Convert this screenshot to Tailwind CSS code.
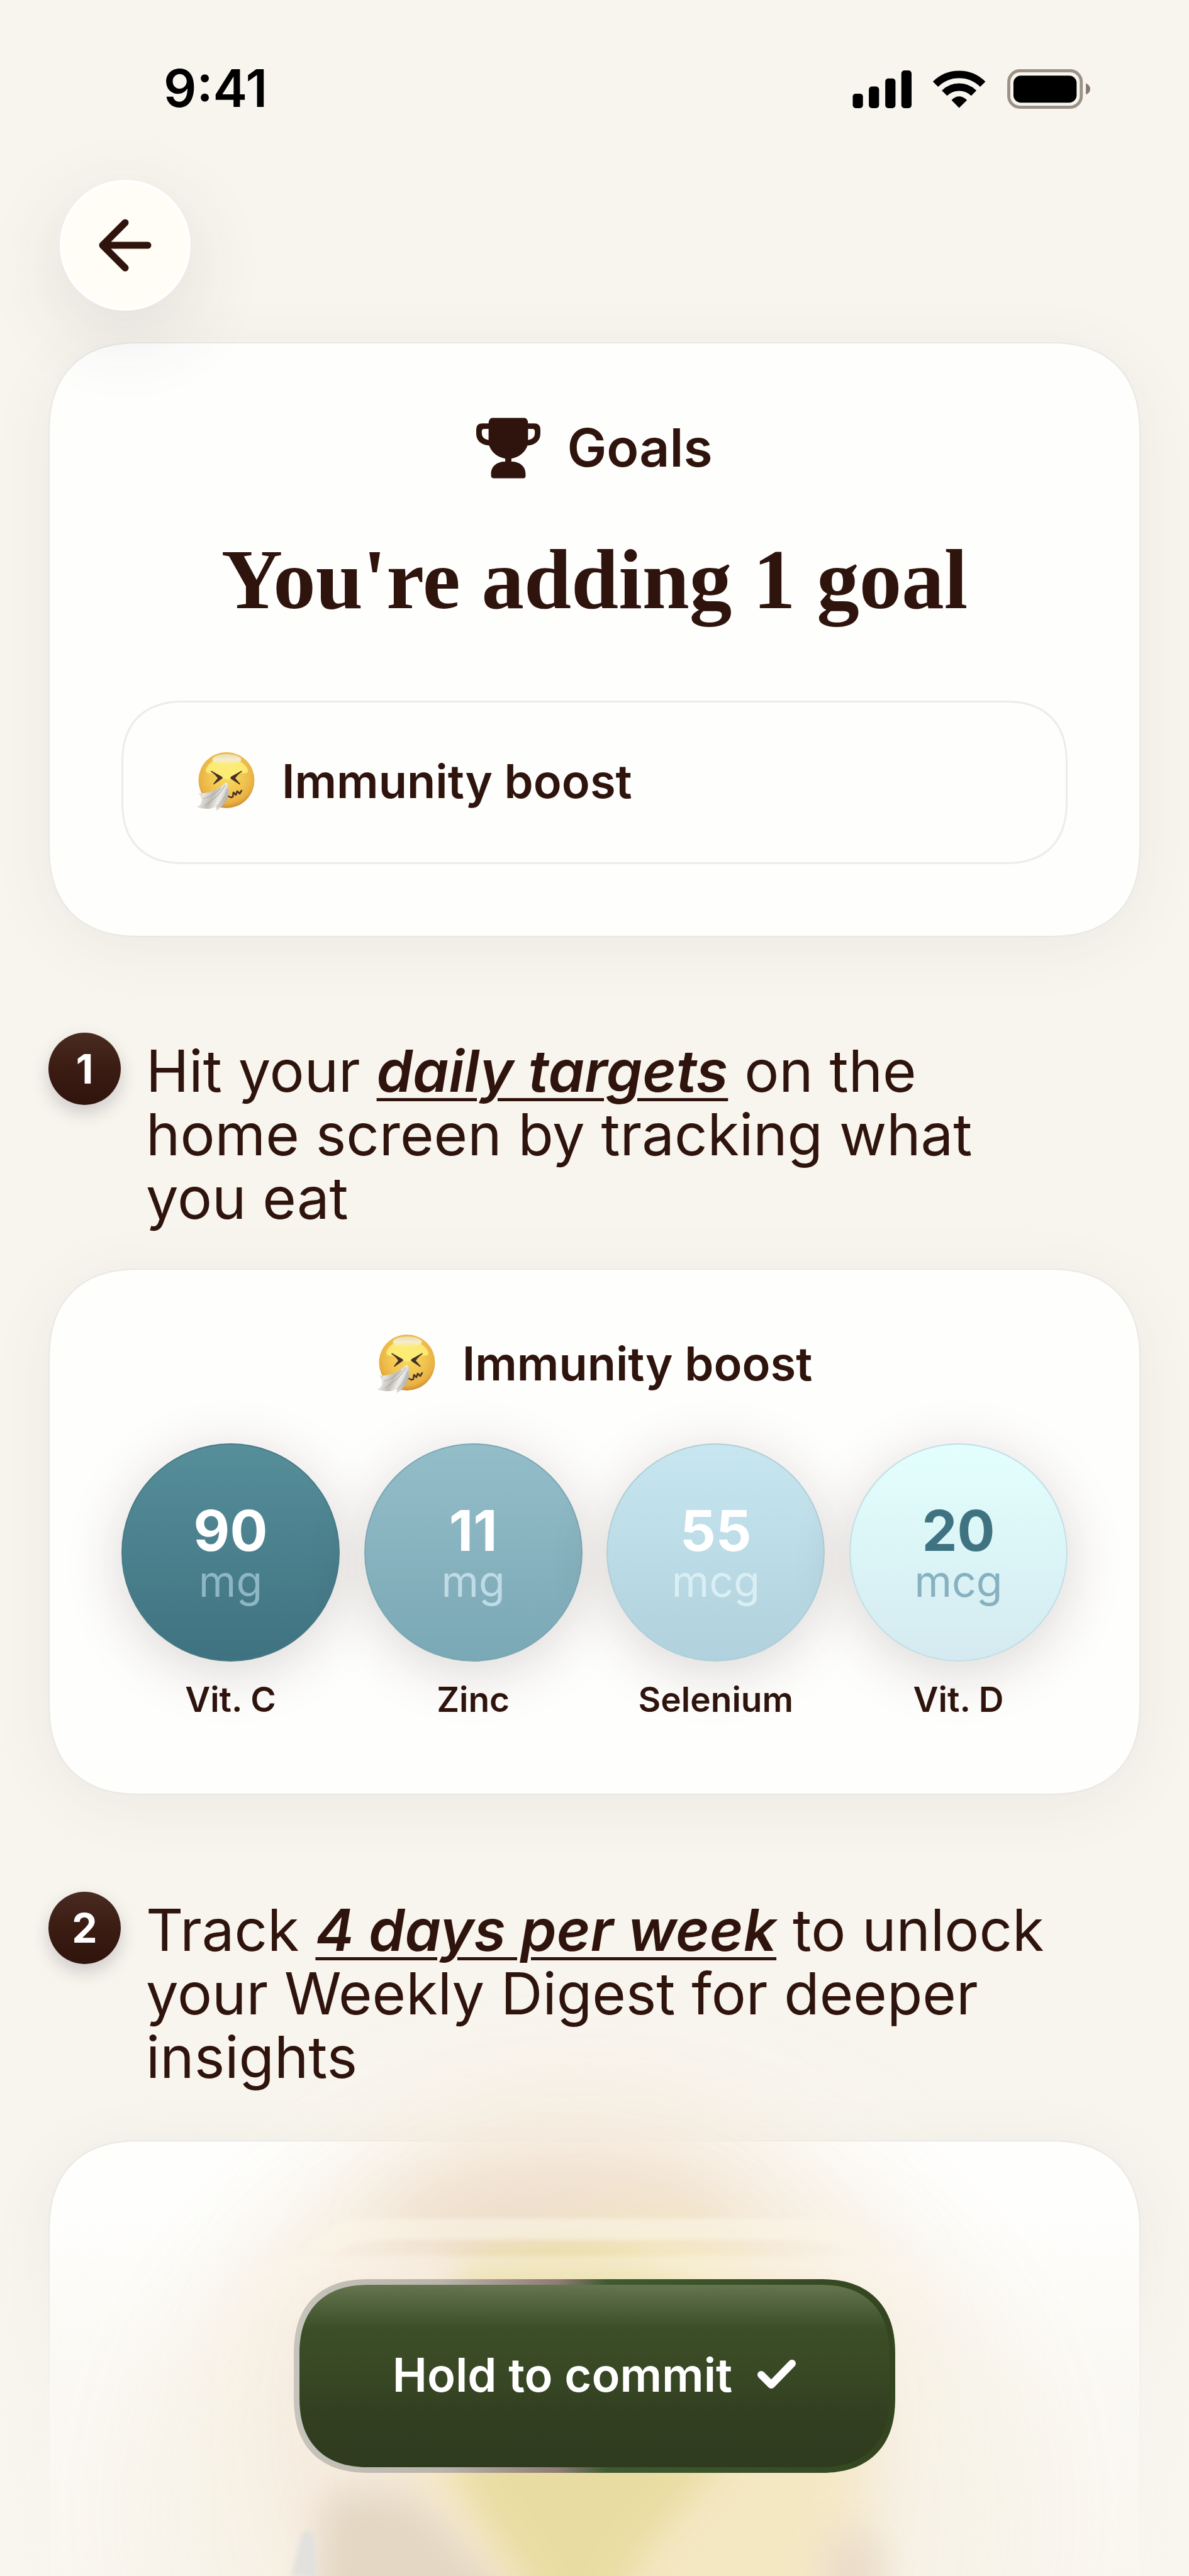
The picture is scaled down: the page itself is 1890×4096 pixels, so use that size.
<!DOCTYPE html>
<html lang="en">

<head>
  <meta charset="UTF-8">
  <meta name="viewport" content="width=device-width, initial-scale=1">
  <title>Goals</title>
  <script src="https://cdn.jsdelivr.net/npm/@tailwindcss/browser@4"></script>
</head>

<body class="relative flex h-screen flex-col overflow-hidden bg-[#f8f5ee] font-['Inter',sans-serif] text-[#2f140d]">

  <!-- Shared symbols -->
  <svg class="absolute size-0">
    <defs>
      <radialGradient id="face" cx="50%" cy="42%" r="58%">
        <stop offset="0" stop-color="#f8dc5c" />
        <stop offset="0.55" stop-color="#f2c550" />
        <stop offset="0.85" stop-color="#e8b143" />
        <stop offset="1" stop-color="#cf8c35" />
      </radialGradient>
      <linearGradient id="shine" x1="0" y1="0" x2="0" y2="1">
        <stop offset="0" stop-color="#eadcae" />
        <stop offset="0.5" stop-color="#f4edcf" />
        <stop offset="1" stop-color="#fbee77" stop-opacity="0.7" />
      </linearGradient>
      <linearGradient id="tissue" x1="0" y1="0" x2="1" y2="0.4">
        <stop offset="0" stop-color="#c9c6c0" />
        <stop offset="0.35" stop-color="#e6e4e0" />
        <stop offset="0.6" stop-color="#bfbbb5" />
        <stop offset="0.8" stop-color="#efeeea" />
        <stop offset="1" stop-color="#b5b1aa" />
      </linearGradient>
    </defs>
    <symbol id="sneeze" viewBox="11 11 94 94">
      <circle cx="59" cy="56.500" r="44.500" fill="url(#face)" />
      <path d="M26 40C32 26 44 22 59 22s28 5 34 18c1 10-12 2-20 8-5 4-7 7-13 7s-8-4-13-7c-8-5-20 2-21-8z" fill="#fdf07a" opacity="0.85" />
      <ellipse cx="59.500" cy="24" rx="23" ry="9" fill="url(#shine)" />
      <path d="M35 42.500L51 51.500Q53 52.500 51 54L39 62.500Q43 57 46 53.500Q42 47 35 42.500zM83 42.500L67 51.500Q65 52.500 67 54L80 62.500Q75 57 72 53.500Q76 47 83 42.500z" fill="#45302a" stroke="#45302a" stroke-width="1.500" stroke-linejoin="round" />
      <path d="M62 82l4 2 3-1 1-7 4 4 2-6 4 4 3-5" fill="none" stroke="#4a2f2a" stroke-width="2.500" stroke-linejoin="round" stroke-linecap="round" />
      <path d="M58 60C62 61 64 70 62 80C60 90 52 99 43 105L42 99C34 104 20 102 11 99C18 97 20 92 19 86Q18 81 15 77C30 79 44 72 58 60z" fill="url(#tissue)" />
      <path d="M57 64C52 76 40 86 24 97M60 70C58 84 50 94 43 99M50 69C42 78 32 84 22 86" fill="none" stroke="#aaa69f" stroke-width="1.500" opacity="0.7" />
    </symbol>
  </svg>

  <!-- Header -->
  <header class="relative z-10">
    <div class="flex h-[282px] items-center justify-between pl-[260px] pr-[157px] text-black">
      <span class="text-[82px] font-semibold leading-none">9:41</span>
      <svg class="h-[67px] w-[378px]" viewBox="37 28 384 68">
        <rect x="37.500" y="69.500" width="16.500" height="23.500" rx="5" />
        <rect x="63.500" y="58" width="16.500" height="35" rx="5" />
        <rect x="90" y="45" width="16.500" height="48" rx="5" />
        <rect x="116" y="32" width="16.500" height="61" rx="5" />
        <g fill="none" stroke="#000" stroke-width="12">
          <path d="M171.100 54.300A54 54 0 0 1 247.500 54.300" />
          <path d="M185.600 68.800A33.500 33.500 0 0 1 233 68.800" />
        </g>
        <path d="M209.300 92.500L197 80Q209 68 222 80z" />
        <rect x="289.500" y="32.500" width="117" height="59" rx="18" fill="none" stroke="#9b9187" stroke-width="5" />
        <rect x="297" y="40.500" width="102" height="43.500" rx="12" />
        <path d="M414 52.500Q421 56 421 62T414 71z" fill="#86786d" />
      </svg>
    </div>
    <button aria-label="Back" class="ml-[95px] mt-1 flex size-[208px] items-center justify-center rounded-full border-4 border-white bg-[#fffdf6] shadow-[0_36px_130px_rgba(60,60,70,0.12)]">
      <svg class="h-[84px] w-[84px]" viewBox="0 0 84 84" fill="none" stroke="#2f140d" stroke-width="11" stroke-linecap="round" stroke-linejoin="round">
        <path d="M42 6L6 42l36 36M6 42h72" />
      </svg>
    </button>
  </header>

  <main class="flex flex-1 flex-col px-[77px]">
    <!-- Goal summary -->
    <section class="mt-[50px] rounded-[145px] border-2 border-[#e9e8e4] bg-[#fefefd] px-[114px] pb-[114px] pt-[110px] shadow-[0_16px_100px_rgba(60,80,50,0.07)] [corner-shape:superellipse(1.25)]">
      <div class="flex h-28 items-center justify-center gap-[42px]">
        <svg class="h-[97px] w-[102px]" viewBox="0 0 104 98" fill="#2f140d">
          <path fill-rule="evenodd" d="M25 0H79Q84 2 84 9H94Q104 9 104 19V25C104 37 96 44 83 45C79 56 70 64 57 66V71C71 71 80 79 80 91V94Q80 98 75 98H29Q24 98 24 93V91C24 79 33 71 47 71V66C34 64 25 56 21 45C8 44 0 37 0 25V19Q0 9 10 9H20Q20 2 25 0zM20 18H13Q9 18 9 22V25Q9 34 20 36zM84 18V36Q95 34 95 25V22Q95 18 91 18z" />
        </svg>
        <span class="text-[84px] font-semibold leading-none">Goals</span>
      </div>
      <h1 class="mt-[74px] text-center font-['Liberation_Serif',serif] text-[135px] font-bold leading-[160px]">You're adding 1 goal</h1>
      <div class="mt-28 flex h-[260px] items-center gap-[42px] rounded-[100px] border-3 border-[#edecea] pb-1 pl-[116px] [corner-shape:superellipse(1.25)]">
        <svg class="size-[94px]"><use href="#sneeze" /></svg>
        <span class="text-[74px] font-semibold leading-none">Immunity boost</span>
      </div>
    </section>

    <!-- Step 1 -->
    <section class="mt-[152px] flex items-start gap-10">
      <span class="flex size-[115px] shrink-0 items-center justify-center rounded-full bg-linear-to-b from-[#4a2b21] via-[#3b1c13] to-[#2f140d] text-[64px] font-bold text-white shadow-[0_12px_28px_rgba(40,30,60,0.2)]">1</span>
      <p class="max-w-[1450px] pt-2.5 text-[92px] leading-[101px]">Hit your <em class="font-semibold underline decoration-[5px] underline-offset-[10px]">daily targets</em> on the home screen by tracking what you eat</p>
    </section>

    <section class="mt-[62px] rounded-[145px] border-2 border-[#e9e8e4] bg-[#fefefd] px-[114px] pb-[118px] pt-[104px] shadow-[0_16px_100px_rgba(60,80,50,0.07)] [corner-shape:superellipse(1.25)]">
      <div class="flex h-[90px] items-center justify-center gap-[42px]">
        <svg class="size-[94px]"><use href="#sneeze" /></svg>
        <span class="text-[74px] font-semibold leading-none">Immunity boost</span>
      </div>
      <ul class="mt-[82px] flex justify-between text-center">
        <li class="w-[347px]">
          <div class="flex h-[347px] flex-col justify-center rounded-full border-2 border-[#467a87] bg-linear-to-b from-[#568e9a] to-[#3f7280] pt-2.5 leading-[80px] shadow-[0_16px_90px_rgba(60,40,30,0.18)]">
            <b class="text-[89px] text-white">90</b>
            <span class="text-[68px] text-[#8fb7c3]">mg</span>
          </div>
          <p class="relative mt-7 text-[55px] font-semibold leading-[64px]">Vit. C</p>
        </li>
        <li class="w-[347px]">
          <div class="flex h-[347px] flex-col justify-center rounded-full border-2 border-[#7ba7b4] bg-linear-to-b from-[#93bdc9] to-[#7ba8b5] pt-2.5 leading-[80px] shadow-[0_16px_90px_rgba(60,40,30,0.18)]">
            <b class="text-[89px] text-white">11</b>
            <span class="text-[68px] text-[#bfdbe5]">mg</span>
          </div>
          <p class="relative mt-7 text-[55px] font-semibold leading-[64px]">Zinc</p>
        </li>
        <li class="w-[347px]">
          <div class="flex h-[347px] flex-col justify-center rounded-full border-2 border-[#b0cdd6] bg-linear-to-b from-[#c7e6f0] to-[#b0d1dd] pt-2.5 leading-[80px] shadow-[0_16px_90px_rgba(60,40,30,0.18)]">
            <b class="text-[89px] text-white">55</b>
            <span class="text-[68px] text-[#d9eff3]">mcg</span>
          </div>
          <p class="relative mt-7 text-[55px] font-semibold leading-[64px]">Selenium</p>
        </li>
        <li class="w-[347px]">
          <div class="flex h-[347px] flex-col justify-center rounded-full border-2 border-[#c0dde5] bg-linear-to-b from-[#e3fffd] to-[#d4eaf0] pt-2.5 leading-[80px] shadow-[0_16px_90px_rgba(60,40,30,0.18)]">
            <b class="text-[89px] text-[#3f7382]">20</b>
            <span class="text-[68px] text-[#86b1c0]">mcg</span>
          </div>
          <p class="relative mt-7 text-[55px] font-semibold leading-[64px]">Vit. D</p>
        </li>
      </ul>
    </section>

    <!-- Step 2 -->
    <section class="mt-[154px] flex items-start gap-10">
      <span class="flex size-[115px] shrink-0 items-center justify-center rounded-full bg-linear-to-b from-[#4a2b21] via-[#3b1c13] to-[#2f140d] text-[64px] font-bold text-white shadow-[0_12px_28px_rgba(40,30,60,0.2)]">2</span>
      <p class="relative z-10 max-w-[1450px] pt-2.5 text-[92px] leading-[101px]">Track <em class="font-semibold underline decoration-[5px] underline-offset-[10px]">4 days per week</em> to unlock your Weekly Digest for deeper insights</p>
    </section>

    <section class="mt-[82px] flex-1 rounded-t-[145px] border-2 border-b-0 border-[#e9e8e4] bg-[#fefefd] shadow-[0_16px_100px_rgba(60,80,50,0.07)] [corner-shape:superellipse(1.25)]"></section>
  </main>

  <!-- Commit bar, with the digest glow behind it -->
  <footer class="absolute inset-x-0 bottom-0 flex justify-center pb-[164px]">
    <div class="absolute inset-x-0 bottom-0 h-[580px] bg-linear-to-b from-[#f9f6ef]/0 via-[#f9f6ef]/75 to-[#f9f6ef]/95"></div>
    <svg class="absolute bottom-0 left-0 w-full" viewBox="0 3162 1920 1000">
      <defs>
        <filter id="b80" x="-50%" y="-50%" width="200%" height="200%"><feGaussianBlur stdDeviation="85" /></filter>
        <filter id="b50" x="-50%" y="-50%" width="200%" height="200%"><feGaussianBlur stdDeviation="50" /></filter>
        <filter id="b30" x="-50%" y="-50%" width="200%" height="200%"><feGaussianBlur stdDeviation="28" /></filter>
        <filter id="b4" x="-20%" y="-20%" width="140%" height="140%"><feGaussianBlur stdDeviation="4" /></filter>
        <linearGradient id="veil" x1="0" y1="0" x2="0" y2="1">
          <stop offset="0" stop-color="#fdf8ec" stop-opacity="0.7" />
          <stop offset="1" stop-color="#fdf8ec" stop-opacity="0" />
        </linearGradient>
      </defs>
      <ellipse cx="950" cy="4060" rx="720" ry="660" fill="#f7f2e6" opacity="0.9" filter="url(#b80)" />
      <ellipse cx="930" cy="3910" rx="480" ry="510" fill="#f6e9dc" opacity="0.95" filter="url(#b80)" />
      <ellipse cx="900" cy="3600" rx="270" ry="90" fill="#ebd9c4" opacity="0.7" filter="url(#b50)" />
      <path d="M820 3700Q1060 3480 1220 3660Q1400 3800 1390 4060Q1380 4200 1250 4300H850Q740 4100 640 3960z" fill="#f4e8c3" filter="url(#b50)" />
      <path d="M740 3650Q960 3590 1100 3690L1180 3960L1060 4100L960 4260H900L740 4010z" fill="#e8dba0" opacity="0.9" filter="url(#b30)" />
      <path d="M520 4040Q600 4000 690 4050L830 4200V4300H500z" fill="#e4d8c4" filter="url(#b30)" />
      <ellipse cx="1378" cy="4160" rx="50" ry="75" fill="#e9dac8" opacity="0.9" filter="url(#b30)" />
      <path d="M470 4162l18-70q15-10 20 10l4 60z" fill="#e2e1de" filter="url(#b4)" />
      <path d="M495 3640Q530 3584 605 3584H1320Q1395 3584 1428 3640L1370 3636Q1330 3618 1270 3618H640Q570 3618 540 3640z" fill="#fbf6e8" opacity="0.6" filter="url(#b4)" />
      <path d="M400 3690Q430 3645 500 3645H1430Q1500 3645 1530 3690V3760H400z" fill="url(#veil)" filter="url(#b4)" opacity="0.6" />
    </svg>
    <button class="relative rounded-[120px] bg-[linear-gradient(90deg,#c6c4bc_0%,#b9b3ab_25%,#8e7b75_44%,#3f5a30_52%,#33451f_100%)] p-[9px] [corner-shape:superellipse(1.25)]">
      <span class="flex h-[290px] items-center gap-10 rounded-[112px] bg-[linear-gradient(180deg,#65754f_0%,#52653e_10%,#3b4e27_24%,#394925_45%,#313e20_75%,#2e3b1e_100%)] px-[148px] pb-1 text-[74px] font-semibold text-white [corner-shape:superellipse(1.25)]">
        Hold to commit
        <svg class="h-[48px] w-[62px]" viewBox="0 0 62 48" fill="none" stroke="#fff" stroke-width="12" stroke-linecap="round" stroke-linejoin="round">
          <path d="M6 24L22 40L55 6" />
        </svg>
      </span>
    </button>
  </footer>
</body>

</html>
